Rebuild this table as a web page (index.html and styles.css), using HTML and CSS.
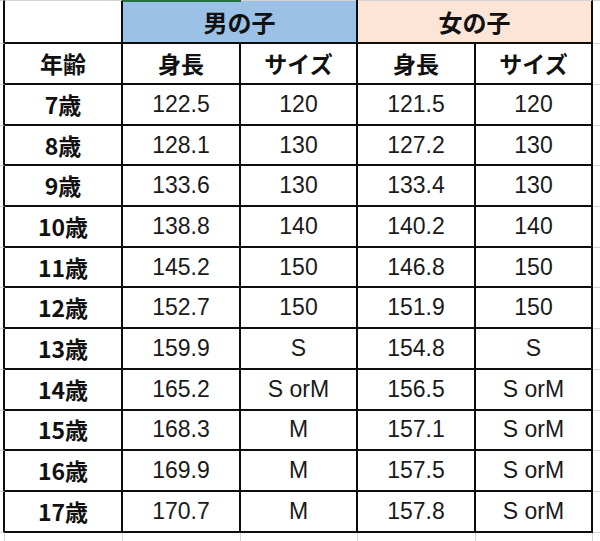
FILE: index.html
```html
<!DOCTYPE html>
<html lang="ja">
<head>
<meta charset="utf-8">
<title>身長とサイズ</title>
<link rel="stylesheet" href="styles.css">
</head>
<body>
<table class="sheet">
  <colgroup>
    <col class="cg">
    <col class="ca"><col class="cb"><col class="cc"><col class="cb2"><col class="cc2">
    <col class="cr">
  </colgroup>
  <tr class="r0">
    <td class="g top"></td>
    <td class="h top"></td>
    <td class="h boy" colspan="2">男の子</td>
    <td class="h girl top" colspan="2">女の子</td>
    <td class="x top"></td>
  </tr>
  <tr class="r1">
    <td class="g"></td>
    <td class="h">年齢</td>
    <td class="h">身長</td>
    <td class="h">サイズ</td>
    <td class="h">身長</td>
    <td class="h">サイズ</td>
    <td class="x"></td>
  </tr>
  <tr class="rd"><td class="g"></td><td class="h">7歳</td><td class="n">122.5</td><td class="n">120</td><td class="n">121.5</td><td class="n">120</td><td class="x"></td></tr>
  <tr class="rd"><td class="g"></td><td class="h">8歳</td><td class="n">128.1</td><td class="n">130</td><td class="n">127.2</td><td class="n">130</td><td class="x"></td></tr>
  <tr class="rd"><td class="g"></td><td class="h">9歳</td><td class="n">133.6</td><td class="n">130</td><td class="n">133.4</td><td class="n">130</td><td class="x"></td></tr>
  <tr class="rd"><td class="g"></td><td class="h">10歳</td><td class="n">138.8</td><td class="n">140</td><td class="n">140.2</td><td class="n">140</td><td class="x"></td></tr>
  <tr class="rd"><td class="g"></td><td class="h">11歳</td><td class="n">145.2</td><td class="n">150</td><td class="n">146.8</td><td class="n">150</td><td class="x"></td></tr>
  <tr class="rd"><td class="g"></td><td class="h">12歳</td><td class="n">152.7</td><td class="n">150</td><td class="n">151.9</td><td class="n">150</td><td class="x"></td></tr>
  <tr class="rd"><td class="g"></td><td class="h">13歳</td><td class="n">159.9</td><td class="n">S</td><td class="n">154.8</td><td class="n">S</td><td class="x"></td></tr>
  <tr class="rd"><td class="g"></td><td class="h">14歳</td><td class="n">165.2</td><td class="n">S orM</td><td class="n">156.5</td><td class="n">S orM</td><td class="x"></td></tr>
  <tr class="rd"><td class="g"></td><td class="h">15歳</td><td class="n">168.3</td><td class="n">M</td><td class="n">157.1</td><td class="n">S orM</td><td class="x"></td></tr>
  <tr class="rd"><td class="g"></td><td class="h">16歳</td><td class="n">169.9</td><td class="n">M</td><td class="n">157.5</td><td class="n">S orM</td><td class="x"></td></tr>
  <tr class="rd"><td class="g"></td><td class="h">17歳</td><td class="n">170.7</td><td class="n">M</td><td class="n">157.8</td><td class="n">S orM</td><td class="x"></td></tr>
  <tr class="rb"><td class="gb"></td><td class="b"></td><td class="b"></td><td class="b"></td><td class="b"></td><td class="b"></td><td class="xb"></td></tr>
</table>
</body>
</html>
```

FILE: styles.css
```css
html, body {
  margin: 0;
  padding: 0;
  background: #ffffff;
}

body {
  width: 600px;
  height: 541px;
  overflow: hidden;
}

.sheet {
  border-collapse: separate;
  border-spacing: 0;
  table-layout: fixed;
  width: 608px;
}

.cg { width: 5px; }
.ca { width: 118px; }
.cb { width: 118px; }
.cc { width: 117px; }
.cb2 { width: 118px; }
.cc2 { width: 117px; }
.cr { width: 15px; }

td {
  padding: 0;
  text-align: center;
  vertical-align: middle;
  box-sizing: border-box;
}

.r0 { height: 44px; }
.r1 { height: 41px; }
.rd { height: 40.7px; }
.rb { height: 20px; }

.h, .n {
  border-right: 2px solid #0d0d0d;
  border-bottom: 2px solid #0d0d0d;
}

.h {
  font-family: "Noto Sans CJK JP", sans-serif;
  font-weight: 700;
  font-size: 23px;
  color: #111111;
  line-height: 1;
}

.n {
  font-family: "Liberation Sans", Arial, sans-serif;
  font-size: 23px;
  color: #1a1a1a;
  line-height: 1;
}

.g {
  border-right: 2px solid #0d0d0d;
  border-bottom: 1px solid #d4d4d4;
}

.x {
  border-bottom: 1px solid #d4d4d4;
}

.top {
  border-top: 1px solid #d4d4d4;
}

.boy {
  background:
    linear-gradient(#217346, #217346) left top / 118px 2px no-repeat,
    linear-gradient(#d4d4d4, #d4d4d4) left top / 100% 1px no-repeat,
    #9bc2e6;
  padding-top: 1px;
  font-size: 24px;
}

.girl {
  background: #fce4d6;
  font-size: 24px;
}

.gb {
  border-right: 1px solid #d4d4d4;
}

.b {
  border-right: 1px solid #d4d4d4;
}

.xb {
  border: 0;
}
```
